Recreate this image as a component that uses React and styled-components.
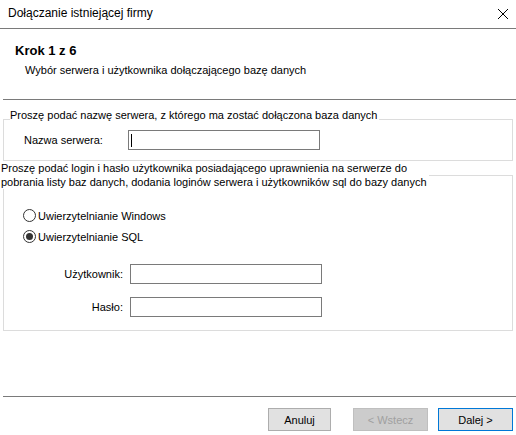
import styled, { createGlobalStyle } from "styled-components";

const GlobalStyle = createGlobalStyle`
  html, body {
    margin: 0;
    padding: 0;
    background: #fff;
  }
  body {
    font-family: "Liberation Sans", Arial, sans-serif;
    font-size: 11px;
    color: #000;
  }
`;

const Window = styled.div`
  width: 516px;
  height: 435px;
  display: flex;
  flex-direction: column;
  background: #fff;
  overflow: hidden;
`;

const TitleBar = styled.div`
  height: 29px;
  flex-shrink: 0;
  display: flex;
  align-items: center;
  justify-content: space-between;
  padding: 0 7px 2px 8px;
  box-sizing: border-box;
  border-bottom: 1px solid #7a7a7a;
  font-size: 12px;
`;

const CloseButton = styled.span`
  display: flex;
  width: 12px;
  height: 12px;
  margin-top: 1px;
`;

const Header = styled.div`
  padding: 14px 0 0 15px;
`;

const StepTitle = styled.div`
  font-weight: bold;
  font-size: 13px;
  line-height: 15px;
`;

const StepDesc = styled.div`
  margin: 6px 0 0 10px;
  line-height: 13px;
`;

const Separator = styled.div`
  margin: ${(p) => p.$top || 0}px 0 0 3px;
  border-top: 1px solid #7a7a7a;
`;

const Group = styled.div`
  margin: ${(p) => p.$top}px 3px 0 3px;
  border: 1px solid #dcdcdc;
  padding-bottom: ${(p) => p.$bottom}px;
`;

const Caption = styled.div`
  width: fit-content;
  background: #fff;
  line-height: ${(p) => p.$lh || 13}px;
  margin: ${(p) => p.$mt}px 0 0 ${(p) => p.$ml}px;
  padding-right: 2px;
`;

const Row = styled.div`
  display: flex;
  align-items: center;
  margin-top: ${(p) => p.$top}px;
  padding-left: ${(p) => p.$left || 0}px;
`;

const Label = styled.span`
  flex-shrink: 0;
  width: ${(p) => p.$width}px;
  text-align: ${(p) => (p.$right ? "right" : "left")};
  margin-right: ${(p) => p.$gap || 0}px;
`;

const TextBox = styled.div`
  width: 192px;
  height: 20px;
  box-sizing: border-box;
  border: 1px solid #7a7a7a;
  background: #fff;
  display: flex;
  align-items: center;
  padding-left: 2px;
`;

const Caret = styled.span`
  width: 1px;
  height: 13px;
  background: #000;
`;

const RadioRow = styled.div`
  display: flex;
  align-items: center;
  height: 21px;
  padding-left: 19px;
`;

const RadioCircle = styled.span`
  width: 13px;
  height: 13px;
  box-sizing: border-box;
  border: 1px solid #333;
  border-radius: 50%;
  background: #fff;
  display: flex;
  align-items: center;
  justify-content: center;
  margin-right: 2px;

  &::after {
    content: "";
    width: 7px;
    height: 7px;
    border-radius: 50%;
    background: #333;
    display: ${(p) => (p.$checked ? "block" : "none")};
  }
`;

const Footer = styled.div`
  margin-top: auto;
  margin-left: 3px;
  border-top: 1px solid #7a7a7a;
  display: flex;
  justify-content: flex-end;
  padding: 11px 3px 4px 0;
`;

const Button = styled.button`
  width: ${(p) => p.$width || 75}px;
  height: 23px;
  margin-left: ${(p) => p.$gap || 0}px;
  box-sizing: border-box;
  padding: 0;
  font-family: "Liberation Sans", Arial, sans-serif;
  font-size: 11px;
  color: ${(p) => (p.disabled ? "#a0a0a0" : "#000")};
  background: ${(p) => (p.disabled ? "#cccccc" : "#e1e1e1")};
  border: 1px solid
    ${(p) => (p.$primary ? "#0078d7" : p.disabled ? "#bfbfbf" : "#adadad")};
`;

export default function App() {
  return (
    <>
      <GlobalStyle />
      <Window>
        <TitleBar>
          <span>Dołączanie istniejącej firmy</span>
          <CloseButton>
            <svg width="12" height="12" viewBox="0 0 12 12">
              <path d="M1 1 L11 11 M11 1 L1 11" stroke="#000" strokeWidth="1" />
            </svg>
          </CloseButton>
        </TitleBar>

        <Header>
          <StepTitle>Krok 1 z 6</StepTitle>
          <StepDesc>Wybór serwera i użytkownika dołączającego bazę danych</StepDesc>
        </Header>

        <Separator $top={22} />

        {/* serwer */}
        <Group $top={19} $bottom={10}>
          <Caption $mt={-11} $ml={6}>
            Proszę podać nazwę serwera, z którego ma zostać dołączona baza danych
          </Caption>
          <Row $top={8} $left={20}>
            <Label $width={104}>Nazwa serwera:</Label>
            <TextBox>
              <Caret />
            </TextBox>
          </Row>
        </Group>

        {/* logowanie */}
        <Group $top={14} $bottom={13}>
          <Caption $mt={-15} $ml={-3} $lh={14}>
            Proszę podać login i hasło użytkownika posiadającego uprawnienia na serwerze do
            <br />
            pobrania listy baz danych, dodania loginów serwera i użytkowników sql do bazy danych
          </Caption>
          <Row $top={16}>
            <RadioRow>
              <RadioCircle />
              Uwierzytelnianie Windows
            </RadioRow>
          </Row>
          <RadioRow>
            <RadioCircle $checked />
            Uwierzytelnianie SQL
          </RadioRow>
          <Row $top={17}>
            <Label $width={119} $right $gap={7}>
              Użytkownik:
            </Label>
            <TextBox />
          </Row>
          <Row $top={13}>
            <Label $width={119} $right $gap={7}>
              Hasło:
            </Label>
            <TextBox />
          </Row>
        </Group>

        <Footer>
          <Button $width={63}>Anuluj</Button>
          <Button $gap={22} disabled>
            &lt; Wstecz
          </Button>
          <Button $gap={10} $primary>
            Dalej &gt;
          </Button>
        </Footer>
      </Window>
    </>
  );
}
